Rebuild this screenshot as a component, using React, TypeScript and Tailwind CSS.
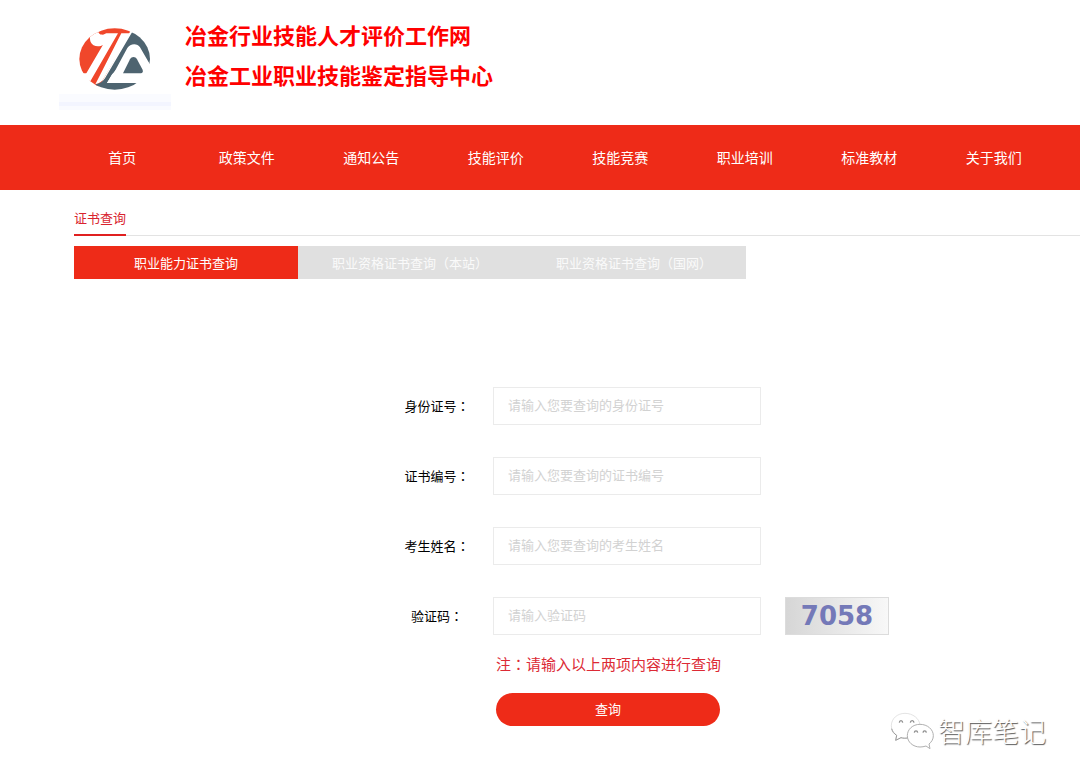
const navItems = [
  "首页",
  "政策文件",
  "通知公告",
  "技能评价",
  "技能竞赛",
  "职业培训",
  "标准教材",
  "关于我们",
];

const tabs = [
  "职业能力证书查询",
  "职业资格证书查询（本站）",
  "职业资格证书查询（国网）",
];

const fields = [
  { id: "idCard", label: "身份证号", placeholder: "请输入您要查询的身份证号" },
  { id: "certNo", label: "证书编号", placeholder: "请输入您要查询的证书编号" },
  { id: "name", label: "考生姓名", placeholder: "请输入您要查询的考生姓名" },
  { id: "captcha", label: "验证码", placeholder: "请输入验证码" },
];

// The TC face centres the full-width colon in its cell
const Colon = () => (
  <span className="font-['Noto_Sans_CJK_TC',sans-serif]">：</span>
);

const Logo = () => (
  <svg viewBox="0 0 336 300" className="h-[100px] w-[112px]" aria-hidden="true">
    <defs>
      <clipPath id="disc">
        <ellipse cx="119" cy="111" rx="106" ry="92" />
      </clipPath>
    </defs>
    <g transform="translate(48 36)" clipPath="url(#disc)">
      <path fill="#f0472b" d="M0 0H182L142 70L60 216L35 154H0Z" />
      <path fill="#4e6470" d="M172 29L240 0V128H226L180 80L112 156L96 183H240V216H50L64 186C76 184 84 178 90 169Z" />
      <path fill="#fff" d="M94 34H129L46 178L16 184L34 154L84 68C74 76 52 74 47 60C44 52 46 42 40 38L66 24C74 34 70 38 84 38Z" />
      <path fill="#fff" d="M139 34H166L87 168C82 178 74 183 61 187Z" />
      <path fill="#fff" d="M117 152L157 78C165 64 187 62 195 76L230 136V176H178V183H96L112 156H194L146 152Z" />
      <path fill="#4e6470" d="M144 154L165 112C170 103 181 103 186 112L202 142C206 150 202 154 196 154Z" />
    </g>
    <path fill="#fafbff" d="M0 252H336V300H0Z" />
    <path fill="#f3f5ff" d="M0 276H336V288H0Z" />
  </svg>
);

const WeChatIcon = () => (
  <svg viewBox="0 0 132 114" className="h-[38px] w-[44px]" fill="#fff" aria-hidden="true">
    <path
      stroke="#d4d4d4"
      strokeWidth="2"
      d="M45 4C22 4 4 20 4 41C4 53 10 62 20 70L17 85L33 77C40 79 48 79 56 78C84 74 92 55 90 39C88 19 68 4 45 4Z"
    />
    <path
      stroke="#b0b0b0"
      strokeWidth="3"
      d="M90 37C68 37 52 52 52 71C52 90 69 105 90 105C96 105 102 104 108 102L120 110L117 96C125 90 130 81 130 71C130 52 112 37 90 37Z"
    />
    <path fill="none" stroke="#999" strokeWidth="3" d="M5 50C7 59 12 65 20 70L17 85L33 77C40 79 46 79 52 78" />
    <g fill="none" stroke="#8c8c8c" strokeWidth="4">
      <path d="M28 32C29 24 37 24 38 32" />
      <path d="M61 32C62 24 71 24 72 32" />
      <path d="M73 62C74 55 82 55 83 62" />
      <path d="M99 62C100 55 108 55 109 62" />
    </g>
  </svg>
);

const App = () => {
  return (
    <div className="relative min-h-screen bg-white font-['Noto_Sans_CJK_SC',sans-serif] text-[13px] text-black">
      <header className="flex h-[125px] items-start gap-[14px] pl-[59px]">
        <div className="pt-[10px]">
          <Logo />
        </div>
        <h1 className="pt-[14px] text-[22px] leading-10 font-bold text-[#ff0000]">
          冶金行业技能人才评价工作网
          <br />
          冶金工业职业技能鉴定指导中心
        </h1>
      </header>

      <nav className="bg-[#ee2b18] pr-6 pl-[60px]">
        <ul className="grid grid-cols-8">
          {navItems.map((item) => (
            <li key={item}>
              <a href="#" className="block pb-px text-center text-sm leading-16 text-white">
                {item}
              </a>
            </li>
          ))}
        </ul>
      </nav>

      <main className="pt-[10px] pl-[74px]">
        <div className="flex border-b border-[#e3e3e3]">
          <h2 className="-mb-px border-b-2 border-[#e02020] pt-[6px] pb-1 leading-6 text-[#d9232e]">
            证书查询
          </h2>
        </div>

        <div className="mt-[10px] flex">
          {tabs.map((tab, index) => (
            <button
              key={tab}
              type="button"
              className={
                index === 0
                  ? "h-[33px] w-56 bg-[#ee2b18] text-white"
                  : "h-[33px] w-56 bg-[#e0e0e0] text-[#fafafa]"
              }
            >
              {tab}
            </button>
          ))}
        </div>

        <form className="mt-[108px] ml-[307px]">
          <div className="space-y-8">
            {fields.map((field) => (
              <div key={field.id} className="flex items-center">
                <label htmlFor={field.id} className="w-28 text-center">
                  {field.label}
                  <Colon />
                </label>
                <input
                  id={field.id}
                  type="text"
                  placeholder={field.placeholder}
                  className="h-[38px] w-[268px] border border-[#ebebeb] px-[14px] pb-[3px] outline-none placeholder:text-[#d2d2d2]"
                />
                {field.id === "captcha" && (
                  <div className="ml-6 flex h-[38px] w-[104px] items-center justify-center border border-[#dcdcdc] bg-linear-to-r from-[#d6d6d6] to-[#f8f8f8] font-['DejaVu_Sans','Noto_Sans',sans-serif] text-[26px] font-bold text-[#7479b8]">
                    7058
                  </div>
                )}
              </div>
            ))}
          </div>

          <div className="ml-[115px] pt-[17px]">
            <p className="text-[15px] leading-6 text-[#dc2a35]">
              注
              <Colon />
              请输入以上两项内容进行查询
            </p>
            <button type="button" className="mt-[17px] h-[33px] w-56 rounded-full bg-[#ee2b18] pb-px text-white">
              查询
            </button>
          </div>
        </form>
      </main>

      <div className="absolute right-[34px] bottom-7 flex items-center gap-1">
        <WeChatIcon />
        <span className="text-[27px] leading-10 font-light text-white [text-shadow:1px_1px_1px_#555]">
          智库笔记
        </span>
      </div>
    </div>
  );
};

export default App;
